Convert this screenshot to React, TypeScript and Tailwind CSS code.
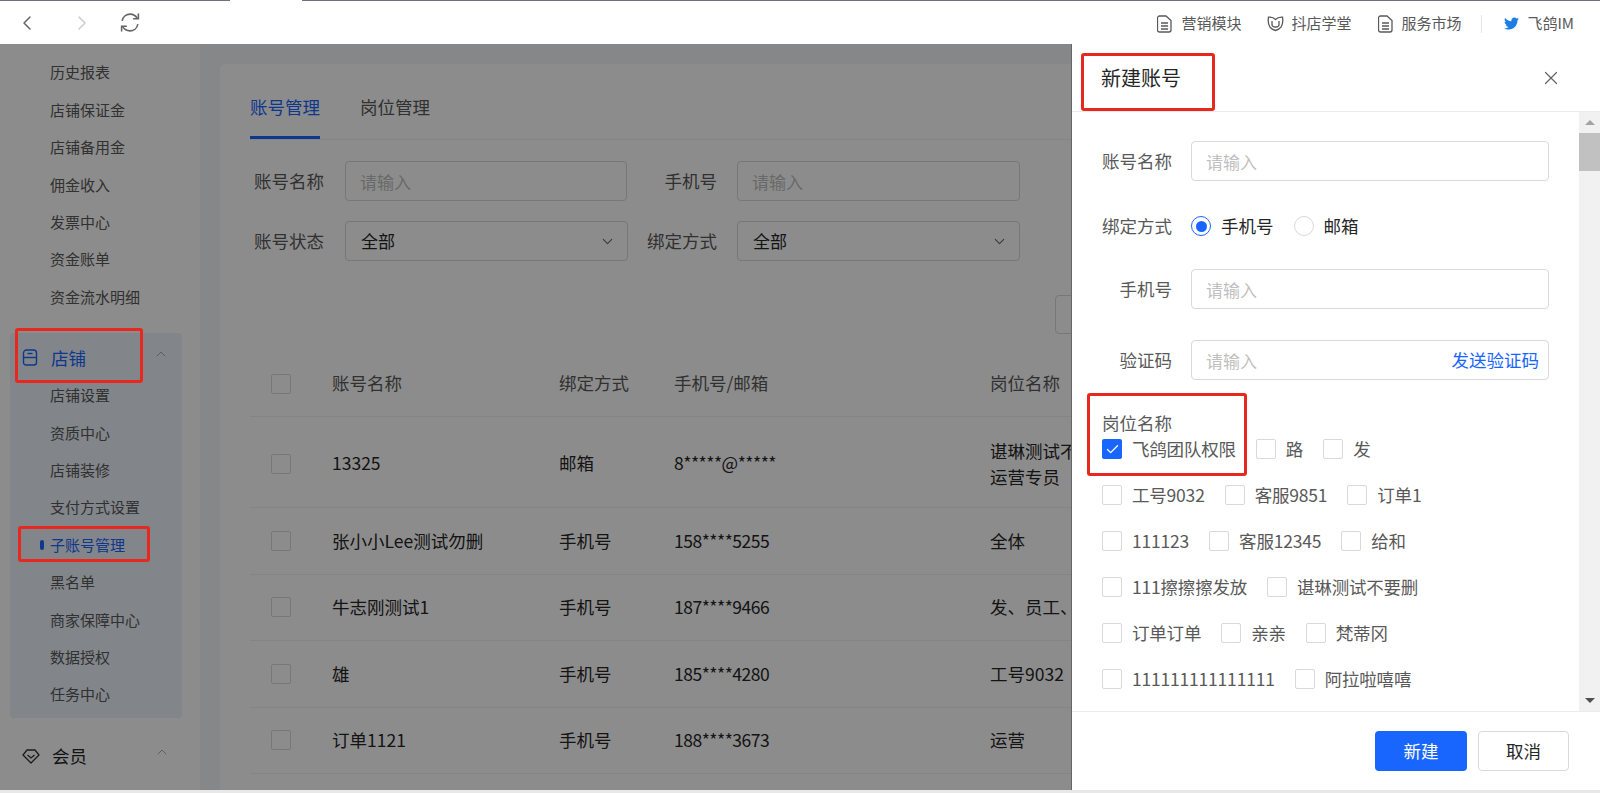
import React from "react";
import { ChevronDown, ChevronLeft, ChevronRight, ChevronUp, Check, X } from "lucide-react";
import { FaTwitter } from "react-icons/fa";

const financeItems = ["历史报表", "店铺保证金", "店铺备用金", "佣金收入", "发票中心", "资金账单", "资金流水明细"];
const shopItems = ["店铺设置", "资质中心", "店铺装修", "支付方式设置", "子账号管理", "黑名单", "商家保障中心", "数据授权", "任务中心"];

const tableRows = [
  { name: "13325", bind: "邮箱", contact: "8*****@*****", post: ["谌琳测试不要删", "运营专员"], tall: true },
  { name: "张小小Lee测试勿删", bind: "手机号", contact: "158****5255", post: ["全体"] },
  { name: "牛志刚测试1", bind: "手机号", contact: "187****9466", post: ["发、员工、客服"] },
  { name: "雄", bind: "手机号", contact: "185****4280", post: ["工号9032"] },
  { name: "订单1121", bind: "手机号", contact: "188****3673", post: ["运营"] },
];

const postRows = [
  ["飞鸽团队权限", "路", "发"],
  ["工号9032", "客服9851", "订单1"],
  ["111123", "客服12345", "给和"],
  ["111擦擦擦发放", "谌琳测试不要删"],
  ["订单订单", "亲亲", "梵蒂冈"],
  ["111111111111111", "阿拉啦嘻嘻"],
];

function DocIcon() {
  return (
    <svg width="15" height="18" viewBox="0 0 15 18" fill="none" stroke="#595959" strokeWidth="1.3">
      <path d="M2.5 1h6.5l5 4.5v9.500a2 2 0 0 1-2 2H2.500a2 2 0 0 1-2-2V3a2 2 0 0 1 2-2z" />
      <path d="M4 8h7M4 11h7M4 14h7" />
    </svg>
  );
}

function BookIcon() {
  return (
    <svg width="17" height="16" viewBox="0 0 17 16" fill="none" stroke="#595959" strokeWidth="1.3">
      <path d="M8.500 3.500C6.500 1.500 4 1 1.500 1.200c-.6 3.500-.4 7 1.500 10 1.500 2 3.500 2.800 5.500 3.300 2-.5 4-1.300 5.500-3.300 1.900-3 2.100-6.500 1.500-10C13 1 10.500 1.500 8.500 3.500z" />
      <path d="M5 5v3.500c0 1.500 1.500 2.500 3.500 2.500s3.500-1 3.500-2.500V5" />
    </svg>
  );
}

function RefreshIcon() {
  return (
    <svg width="22" height="21" viewBox="0 0 21 20" fill="none" stroke="#666666" strokeWidth="1.5">
      <path d="M3 8.500C3.800 4.500 7 2 10.500 2c3 0 5.500 1.500 7 4" />
      <path d="M18.500 1.500v5h-5" />
      <path d="M18 11.500C17.200 15.500 14 18 10.500 18c-3 0-5.500-1.500-7-4" />
      <path d="M2.500 18.500v-5h5" />
    </svg>
  );
}

function StoreIcon() {
  return (
    <svg width="16" height="17" viewBox="0 0 16 17" fill="none" stroke="#1966ff" strokeWidth="1.4">
      <path d="M4.500 1h7a3 3 0 0 1 3 3v9.500a2.500 2.500 0 0 1-2.500 2.500H4a2.500 2.500 0 0 1-2.500-2.500V4a3 3 0 0 1 3-3z" />
      <path d="M1.500 8.500h13" />
      <path d="M5.500 4.500h5" />
    </svg>
  );
}

function MemberIcon() {
  return (
    <svg width="18" height="15" viewBox="0 0 18 15" fill="none" stroke="#333333" strokeWidth="1.300">
      <path d="M5 1h8l4 5-8 8-8-8z" strokeLinejoin="round" />
      <path d="M5.500 6l3.500 3 3.500-3" />
    </svg>
  );
}

function Box({ checked = false }: { checked?: boolean }) {
  return checked ? (
    <span className="flex h-5 w-5 shrink-0 items-center justify-center rounded-[2px] bg-[#1966ff]">
      <Check size={15} strokeWidth={2.2} className="text-white" />
    </span>
  ) : (
    <span className="h-5 w-5 shrink-0 rounded-[2px] border border-[#d9d9d9] bg-white" />
  );
}

function TextInput({ className = "" }: { className?: string }) {
  return (
    <input
      readOnly
      placeholder="请输入"
      className={`h-10 rounded-[4px] border border-[#d9d9d9] bg-white px-[14px] text-[17px] outline-none placeholder:text-[#bfbfbf] ${className}`}
    />
  );
}

function SelectBox() {
  return (
    <div className="flex h-10 w-[283px] items-center justify-between rounded-[4px] border border-[#d9d9d9] bg-white pl-[15px] pr-[11px] text-[17px] text-[#262626]">
      全部
      <ChevronDown size={17} strokeWidth={1.5} className="text-[#666666]" />
    </div>
  );
}

function FormRow({ label, className = "", children }: { label: string; className?: string; children: React.ReactNode }) {
  return (
    <div className={`flex h-10 items-center ${className}`}>
      <span className="w-[70px] text-right text-[#595959]">{label}</span>
      <div className="ml-[19px] flex items-center">{children}</div>
    </div>
  );
}

function Sidebar() {
  return (
    <aside className="h-full w-[200px] shrink-0 overflow-hidden bg-white pt-[10px] text-[15px] text-[#595959]">
      {financeItems.map((item) => (
        <div key={item} className="flex h-[37.4px] items-center pl-[50px]">{item}</div>
      ))}
      <div className="mx-[10px] mt-[17px] w-[172px] rounded-[4px] bg-[#edf3fb] pb-[5px]">
        <div className="flex h-[44px] items-center pl-3 pr-[13px] pt-[6px]">
          <StoreIcon />
          <span className="ml-[13px] flex-1 text-[17.5px] text-[#1966ff]">店铺</span>
          <ChevronUp size={16} strokeWidth={1.4} className="mb-2 text-[#a6a6a6]" />
        </div>
        {shopItems.map((item) => (
          <div key={item} className={`relative flex h-[37.4px] items-center pl-[40px] ${item === "子账号管理" ? "text-[#1966ff]" : ""}`}>
            {item === "子账号管理" && <span className="absolute left-[30px] h-[10px] w-1 rounded-full bg-[#1966ff]" />}
            {item}
          </div>
        ))}
      </div>
      <div className="mt-[16px] flex h-[44px] items-center pl-[22px] pr-[30px] text-[#262626]">
        <MemberIcon />
        <span className="ml-[12px] flex-1 text-[17.5px]">会员</span>
        <ChevronUp size={16} strokeWidth={1.4} className="mb-2 text-[#a6a6a6]" />
      </div>
      <div className="flex h-[37.4px] items-center pl-[50px]">会员列表</div>
    </aside>
  );
}

function MainPanel() {
  return (
    <main className="h-full flex-1 overflow-hidden bg-[#f5f6f8] pl-5 pt-5">
      <div className="h-full rounded-tl-[6px] bg-white pl-[30px] text-[17.5px]">
        <div className="flex h-[76px] items-end gap-10 border-b border-[#f0f0f0]">
          <div className="flex h-full items-center border-b-[3px] border-[#1966ff] pt-[14px] text-[#1966ff]">账号管理</div>
          <div className="flex h-full items-center pt-[14px] pb-[3px] text-[#595959]">岗位管理</div>
        </div>
        <div className="mt-[21px] flex flex-col gap-5 text-[#595959]">
          <div className="flex items-center">
            <span className="w-[74px] text-right">账号名称</span>
            <TextInput className="ml-[21px] w-[282px]" />
            <span className="w-[90px] text-right">手机号</span>
            <TextInput className="ml-5 w-[283px]" />
          </div>
          <div className="flex items-center">
            <span className="w-[74px] text-right">账号状态</span>
            <div className="ml-[21px] w-[282px]"><SelectBox /></div>
            <span className="w-[90px] text-right">绑定方式</span>
            <div className="ml-5"><SelectBox /></div>
          </div>
        </div>
        <div className="ml-[805px] mt-[34px] h-[39px] w-[90px] rounded-[4px] border border-[#d9d9d9] bg-white" />
        <div className="mt-[17px] w-[1300px] text-[#595959]">
          <div className="grid h-[66px] grid-cols-[61px_227px_115px_316px_1fr] items-center border-b border-[#f0f0f0] pl-[21px]">
            <Box />
            <span>账号名称</span>
            <span>绑定方式</span>
            <span>手机号/邮箱</span>
            <span>岗位名称</span>
          </div>
          {tableRows.map((row) => (
            <div
              key={row.name}
              className={`grid grid-cols-[61px_227px_115px_316px_1fr] items-center border-b border-[#f0f0f0] pl-[21px] text-[#262626] ${row.tall ? "h-[91px] pt-[3px]" : "h-[66.500px]"}`}
            >
              <Box />
              <span>{row.name}</span>
              <span>{row.bind}</span>
              <span className="tracking-[-0.5px]">{row.contact}</span>
              <div className="leading-[26px]">
                {row.post.map((p) => <div key={p}>{p}</div>)}
              </div>
            </div>
          ))}
        </div>
      </div>
    </main>
  );
}

function Drawer() {
  return (
    <div className="absolute bottom-0 right-0 top-0 flex w-[529px] flex-col border-l border-[#666666] bg-white text-[17.5px]">
      <div className="flex h-[68px] shrink-0 items-center justify-between border-b border-[#ececec] pl-[29px] pr-[38px]">
        <span className="text-[20px] text-[#262626]">新建账号</span>
        <X size={22} strokeWidth={1.3} className="text-[#666666]" />
      </div>
      <div className="flex min-h-0 flex-1">
        <div className="flex-1 overflow-hidden pl-[30px] pt-[29px]">
          <FormRow label="账号名称">
            <TextInput className="w-[358px]" />
          </FormRow>
          <FormRow label="绑定方式" className="mt-[25px]">
            <div className="flex items-center text-[#262626]">
              <span className="flex h-5 w-5 items-center justify-center rounded-full border border-[#1966ff]">
                <span className="h-[11px] w-[11px] rounded-full bg-[#1966ff]" />
              </span>
              <span className="ml-[10px]">手机号</span>
              <span className="ml-5 h-5 w-5 rounded-full border border-[#d9d9d9]" />
              <span className="ml-[10px]">邮箱</span>
            </div>
          </FormRow>
          <FormRow label="手机号" className="mt-[23px]">
            <TextInput className="w-[358px]" />
          </FormRow>
          <FormRow label="验证码" className="mt-[31px]">
            <div className="relative">
              <TextInput className="w-[358px]" />
              <span className="absolute right-[10px] top-[7px] text-[#1966ff]">发送验证码</span>
            </div>
          </FormRow>
          <div className="mt-[31px] leading-[24px] text-[#595959]">岗位名称</div>
          <div className="mt-[1px] flex flex-col gap-5">
            {postRows.map((row, i) => (
              <div key={i} className="flex h-[26px] items-center gap-5 text-[#595959]">
                {row.map((name) => (
                  <label key={name} className="flex items-center gap-[10px]">
                    <Box checked={name === "飞鸽团队权限"} />
                    <span className="tracking-[-0.2px]">{name}</span>
                  </label>
                ))}
              </div>
            ))}
          </div>
        </div>
        <div className="flex w-[21px] shrink-0 flex-col justify-between bg-[#f1f1f1] pb-[8px] pt-[8px]">
          <div>
            <div className="mx-auto h-0 w-0 border-x-[5px] border-b-[5px] border-x-transparent border-b-[#a3a3a3]" />
            <div className="mt-[8px] h-[38px] bg-[#c1c1c1]" />
          </div>
          <div className="mx-auto h-0 w-0 border-x-[5px] border-t-[5px] border-x-transparent border-t-[#505050]" />
        </div>
      </div>
      <div className="flex h-[79px] shrink-0 items-center justify-end gap-[11px] border-t border-[#ececec] pr-[31px]">
        <button className="h-10 w-[92px] rounded-[4px] bg-[#1966ff] text-white">新建</button>
        <button className="h-10 w-[91px] rounded-[4px] border border-[#d9d9d9] bg-white text-[#262626]">取消</button>
      </div>
    </div>
  );
}

export default function App() {
  return (
    <div className="relative flex h-[793px] w-[1600px] flex-col overflow-hidden bg-white font-['Noto_Sans_CJK_SC','Liberation_Sans',sans-serif]">
      <div className="flex h-px shrink-0 bg-[#6f7180] pl-[230px]">
        <div className="h-px w-[72px] bg-white" />
      </div>
      <header className="flex h-[43px] shrink-0 items-center bg-white pl-[15px] pr-[26px] text-[15px] text-[#595959]">
        <ChevronLeft size={24} strokeWidth={1.5} className="text-[#666666]" />
        <ChevronRight size={24} strokeWidth={1.5} className="ml-[31px] text-[#cccccc]" />
        <div className="ml-[25px]"><RefreshIcon /></div>
        <div className="ml-auto flex items-center pt-[2px]">
          <DocIcon />
          <span className="ml-[9px]">营销模块</span>
          <div className="ml-[26px]"><BookIcon /></div>
          <span className="ml-[7px]">抖店学堂</span>
          <div className="ml-[27px]"><DocIcon /></div>
          <span className="ml-[8px]">服务市场</span>
          <span className="ml-[20px] h-[18px] w-px bg-[#e5e5e5]" />
          <FaTwitter size={15} className="ml-[22px] text-[#1c7fe6]" />
          <span className="ml-[8px]">飞鸽IM</span>
        </div>
      </header>
      <div className="relative flex h-[746px] shrink-0">
        <Sidebar />
        <MainPanel />
        <div className="absolute inset-0 bg-black/45" />
        <Drawer />
      </div>
      <div className="h-[3px] shrink-0 bg-[#e8e8e8]" />

      {/* red marks drawn on the screenshot */}
      <div className="absolute left-[15px] top-[328px] h-[55px] w-[128px] rounded-[3px] border-[3px] border-[#e8281e]" />
      <div className="absolute left-[18px] top-[526px] h-[36px] w-[132px] rounded-[3px] border-[3px] border-[#e8281e]" />
      <div className="absolute left-[1081px] top-[53px] h-[58px] w-[134px] rounded-[3px] border-[3px] border-[#e8281e]" />
      <div className="absolute left-[1087px] top-[393px] h-[83px] w-[160px] rounded-[3px] border-[3px] border-[#e8281e]" />
    </div>
  );
}
